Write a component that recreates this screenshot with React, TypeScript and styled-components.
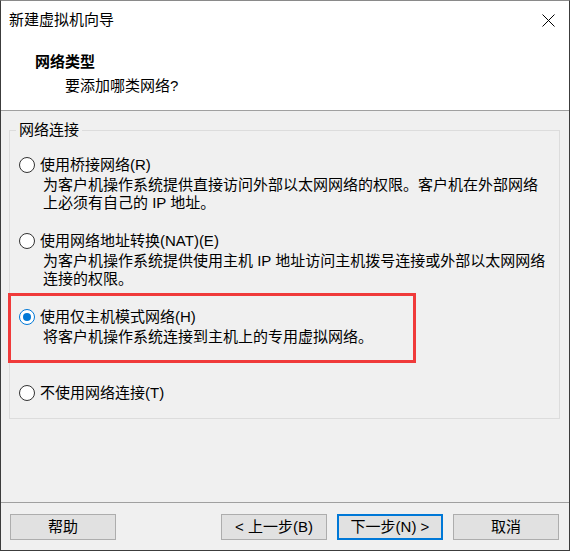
import React from "react";
import styled, { createGlobalStyle } from "styled-components";

const GlobalStyle = createGlobalStyle`
    html, body {
        margin: 0;
        padding: 0;
        background: #f0f0f0;
    }
    * {
        box-sizing: border-box;
    }
    body {
        font-family: "Liberation Sans", "Noto Sans CJK SC", sans-serif;
        font-size: 15px;
        color: #000;
    }
`;

type NetworkOption = {
    label: string;
    lines: string[];
    checked?: boolean;
    highlighted?: boolean;
};

const options: NetworkOption[] = [
    {
        label: "使用桥接网络(R)",
        lines: [
            "为客户机操作系统提供直接访问外部以太网网络的权限。客户机在外部网络",
            "上必须有自己的 IP 地址。",
        ],
    },
    {
        label: "使用网络地址转换(NAT)(E)",
        lines: [
            "为客户机操作系统提供使用主机 IP 地址访问主机拨号连接或外部以太网网络",
            "连接的权限。",
        ],
    },
    {
        label: "使用仅主机模式网络(H)",
        lines: ["将客户机操作系统连接到主机上的专用虚拟网络。"],
        checked: true,
        highlighted: true,
    },
    {
        label: "不使用网络连接(T)",
        lines: [],
    },
];

const CloseIcon = () => (
    <svg width="13" height="13" viewBox="0 0 13 13">
        <path d="M0.5 0.5 L12.5 12.5 M12.5 0.5 L0.5 12.5" stroke="#000" strokeWidth="1" fill="none" />
    </svg>
);

const App = () => {
    return <Window>
        <GlobalStyle />
        <TitleBar>
            <span>新建虚拟机向导</span>
            <CloseButton><CloseIcon /></CloseButton>
        </TitleBar>
        <Header>
            <Heading>网络类型</Heading>
            <SubHeading>要添加哪类网络?</SubHeading>
        </Header>
        <Body>
            <GroupBox>
                <Legend>网络连接</Legend>
                <OptionList>
                    {options.map((opt) => (
                        <Option key={opt.label}>
                            {opt.highlighted && <Highlight />}
                            <OptionRow>
                                <Radio $checked={!!opt.checked} />
                                <span>{opt.label}</span>
                            </OptionRow>
                            {opt.lines.length > 0 && <Description>
                                {opt.lines.map((line) => <div key={line}>{line}</div>)}
                            </Description>}
                        </Option>
                    ))}
                </OptionList>
            </GroupBox>
        </Body>
        <Footer>
            <Button>帮助</Button>
            <Spacer />
            <Button>&lt; 上一步(B)</Button>
            <Button $primary>下一步(N) &gt;</Button>
            <Button>取消</Button>
        </Footer>
    </Window>
}

export default App;

const Window = styled.div`
    width: 570px;
    height: 551px;
    display: flex;
    flex-direction: column;
    border: 1px solid #3c3c3c;
    border-top-color: #8a8a8a;
    background: #f0f0f0;
`

const TitleBar = styled.div`
    height: 38px;
    background: #fff;
    display: flex;
    align-items: center;
    justify-content: space-between;
    padding: 0 14px 0 8px;
    line-height: 18px;
`

const CloseButton = styled.div`
    width: 13px;
    height: 13px;
    display: flex;
`

const Header = styled.div`
    height: 72px;
    background: #fff;
    border-bottom: 1px solid #a0a0a0;
    padding: 11px 0 0 34px;
    line-height: 24px;
`

const Heading = styled.div`
    font-weight: bold;
`

const SubHeading = styled.div`
    padding-left: 30px;
`

const Body = styled.div`
    flex: 1;
    padding: 10px 9px 0 8px;
`

const GroupBox = styled.fieldset`
    margin: 0;
    padding: 0 0 16px 0;
    border: 1px solid #dcdcdc;
    min-width: 0;
`

const Legend = styled.legend`
    margin-left: 6px;
    padding: 0 3px;
    line-height: 18px;
`

const OptionList = styled.div`
    padding: 17px 0 0 9px;
`

const Option = styled.div`
    position: relative;
    min-height: 76px;

    &:last-child {
        min-height: 0;
    }
`

const Highlight = styled.div`
    position: absolute;
    left: -11px;
    top: -15px;
    width: 408px;
    height: 70px;
    border: 3px solid #f03a3a;
    pointer-events: none;
`

const OptionRow = styled.div`
    display: flex;
    align-items: center;
    gap: 5px;
    height: 18px;
    line-height: 18px;
`

const Radio = styled.span<{ $checked: boolean }>`
    width: 16px;
    height: 16px;
    border-radius: 50%;
    border: 1px solid ${(p) => (p.$checked ? "#0078d7" : "#333")};
    background: #fff;
    display: flex;
    align-items: center;
    justify-content: center;

    &::after {
        content: "";
        width: 8px;
        height: 8px;
        border-radius: 50%;
        background: #0078d7;
        display: ${(p) => (p.$checked ? "block" : "none")};
    }
`

const Description = styled.div`
    margin-top: 2px;
    padding-left: 24px;
    line-height: 18px;
    white-space: nowrap;
`

const Footer = styled.div`
    height: 48px;
    border-top: 1px solid #a0a0a0;
    display: flex;
    align-items: flex-start;
    gap: 10px;
    padding: 11px 10px 0 9px;
`

const Spacer = styled.div`
    flex: 1;
`

const Button = styled.div<{ $primary?: boolean }>`
    width: 106px;
    height: 26px;
    background: #e1e1e1;
    border: ${(p) => (p.$primary ? "2px solid #0078d7" : "1px solid #adadad")};
    display: flex;
    align-items: center;
    justify-content: center;
    line-height: 18px;
`
